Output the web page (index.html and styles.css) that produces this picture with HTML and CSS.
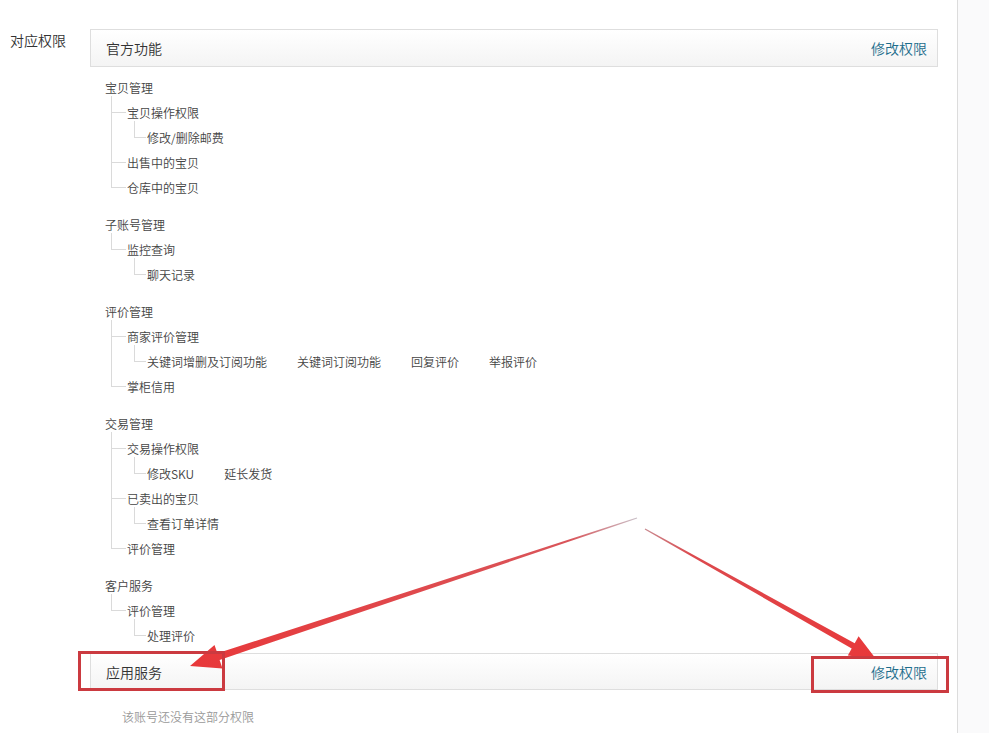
FILE: index.html
```html
<!DOCTYPE html>
<html lang="zh-CN">
<head>
<meta charset="utf-8">
<title>对应权限</title>
<link rel="stylesheet" href="styles.css">
</head>
<body>
<div class="page">
  <div class="main">
    <div class="label">对应权限</div>
    <div class="content">
      <div class="panel-head">
        <span class="panel-title">官方功能</span>
        <a class="panel-link" href="#">修改权限</a>
      </div>
      <div class="tree">
        <div class="group">
          <div class="node">宝贝管理</div>
          <ul class="children">
            <li><span class="node">宝贝操作权限</span>
              <ul class="children sub leaves"><li>修改/删除邮费</li></ul>
            </li>
            <li><span class="node">出售中的宝贝</span></li>
            <li><span class="node">仓库中的宝贝</span></li>
          </ul>
        </div>
        <div class="group">
          <div class="node">子账号管理</div>
          <ul class="children">
            <li><span class="node">监控查询</span>
              <ul class="children sub leaves"><li>聊天记录</li></ul>
            </li>
          </ul>
        </div>
        <div class="group">
          <div class="node">评价管理</div>
          <ul class="children">
            <li><span class="node">商家评价管理</span>
              <ul class="children sub leaves"><li>关键词增删及订阅功能</li><li>关键词订阅功能</li><li>回复评价</li><li>举报评价</li></ul>
            </li>
            <li><span class="node">掌柜信用</span></li>
          </ul>
        </div>
        <div class="group">
          <div class="node">交易管理</div>
          <ul class="children">
            <li><span class="node">交易操作权限</span>
              <ul class="children sub leaves"><li>修改SKU</li><li>延长发货</li></ul>
            </li>
            <li><span class="node">已卖出的宝贝</span>
              <ul class="children sub leaves"><li>查看订单详情</li></ul>
            </li>
            <li><span class="node">评价管理</span></li>
          </ul>
        </div>
        <div class="group">
          <div class="node">客户服务</div>
          <ul class="children">
            <li><span class="node">评价管理</span>
              <ul class="children sub leaves"><li>处理评价</li></ul>
            </li>
          </ul>
        </div>
      </div>
      <div class="panel-head second">
        <span class="panel-title">应用服务</span>
        <a class="panel-link" href="#">修改权限</a>
      </div>
      <p class="empty">该账号还没有这部分权限</p>
    </div>
  </div>
  <div class="side"></div>
</div>
<svg class="annot" width="989" height="733" viewBox="0 0 989 733">
  <defs>
    <linearGradient id="a1" x1="637" y1="518" x2="190" y2="666" gradientUnits="userSpaceOnUse">
      <stop offset="0" stop-color="#c9c0c8"/>
      <stop offset="0.15" stop-color="#d9555a"/>
      <stop offset="1" stop-color="#e8383a"/>
    </linearGradient>
    <linearGradient id="a2" x1="645" y1="529" x2="875" y2="658" gradientUnits="userSpaceOnUse">
      <stop offset="0" stop-color="#c98a90"/>
      <stop offset="0.2" stop-color="#dc4a4e"/>
      <stop offset="1" stop-color="#e8383a"/>
    </linearGradient>
  </defs>
  <polygon fill="url(#a1)" points="637.2,518.6 219.6,659.9 222.5,668.5 190,666 214.5,645 217.4,653.3 636.8,517.4"/>
  <polygon fill="url(#a2)" points="644.7,529.6 851.7,648.4 847.8,655.5 876,659 858.6,636.2 854.7,643.2 645.3,528.4"/>
  <rect x="79.5" y="652.5" width="144" height="37" fill="none" stroke="#cb3a40" stroke-width="3"/>
  <rect x="812.5" y="657.5" width="135" height="34" fill="none" stroke="#cb3a40" stroke-width="3"/>
</svg>
</body>
</html>
```
FILE: styles.css
```css
html, body {
  margin: 0;
  padding: 0;
  background: #ffffff;
}
body {
  font-family: "Noto Sans CJK SC", "Noto Sans", "Liberation Sans", sans-serif;
  font-weight: 350;
  color: #333;
  width: 989px;
  height: 733px;
  overflow: hidden;
  position: relative;
}
.page {
  display: flex;
  height: 733px;
}
.main {
  width: 958px;
  border-right: 1px solid #dcdcdc;
  display: flex;
  box-sizing: border-box;
}
.side {
  flex: 1;
  background: #fafafb;
}
.label {
  width: 80px;
  padding: 30px 0 0 10px;
  font-size: 14px;
  line-height: 20px;
  color: #333;
}
.content {
  width: 848px;
  padding-top: 29px;
}
.panel-head {
  height: 36px;
  border: 1px solid #dedede;
  background: linear-gradient(to bottom, #ffffff 0%, #f4f4f4 100%);
  display: flex;
  align-items: center;
  justify-content: space-between;
  padding: 0 10px 0 15px;
}
.panel-head.second {
  margin-top: 5px;
  height: 35px;
}
.panel-title {
  font-size: 14px;
  color: #333;
}
.panel-link {
  font-size: 14px;
  color: #1d6d8c;
  text-decoration: none;
}
.tree {
  padding: 8px 0 0 15px;
  font-size: 12px;
  color: #444;
}
.group + .group {
  margin-top: 12px;
}
.node {
  display: block;
  line-height: 25px;
  height: 25px;
}
ul.children {
  list-style: none;
  margin: 0 0 0 6px;
  padding: 0 0 0 16px;
  --ind: 16px;
}
ul.children.sub {
  margin-left: 7px;
  padding-left: 13px;
  --ind: 13px;
}
ul.children > li {
  position: relative;
  line-height: 25px;
}
ul.children > li::before {
  content: "";
  position: absolute;
  left: calc(-1 * var(--ind));
  top: -4px;
  width: calc(var(--ind) - 2px);
  height: 16px;
  border-left: 1px solid #dadada;
  border-bottom: 1px solid #dadada;
}
ul.children > li:not(:last-child)::after {
  content: "";
  position: absolute;
  left: calc(-1 * var(--ind));
  top: 12px;
  bottom: -4px;
  border-left: 1px solid #dadada;
}
ul.leaves {
  display: flex;
  gap: 30px;
}
ul.leaves > li {
  height: 25px;
}
ul.leaves > li:not(:first-child)::before,
ul.leaves > li:not(:first-child)::after {
  display: none;
}
ul.leaves > li:first-child::after {
  display: none;
}
.empty {
  margin: 17px 0 0 32px;
  font-size: 12px;
  color: #999;
  line-height: 20px;
}
.annot {
  position: absolute;
  left: 0;
  top: 0;
  pointer-events: none;
}
```
